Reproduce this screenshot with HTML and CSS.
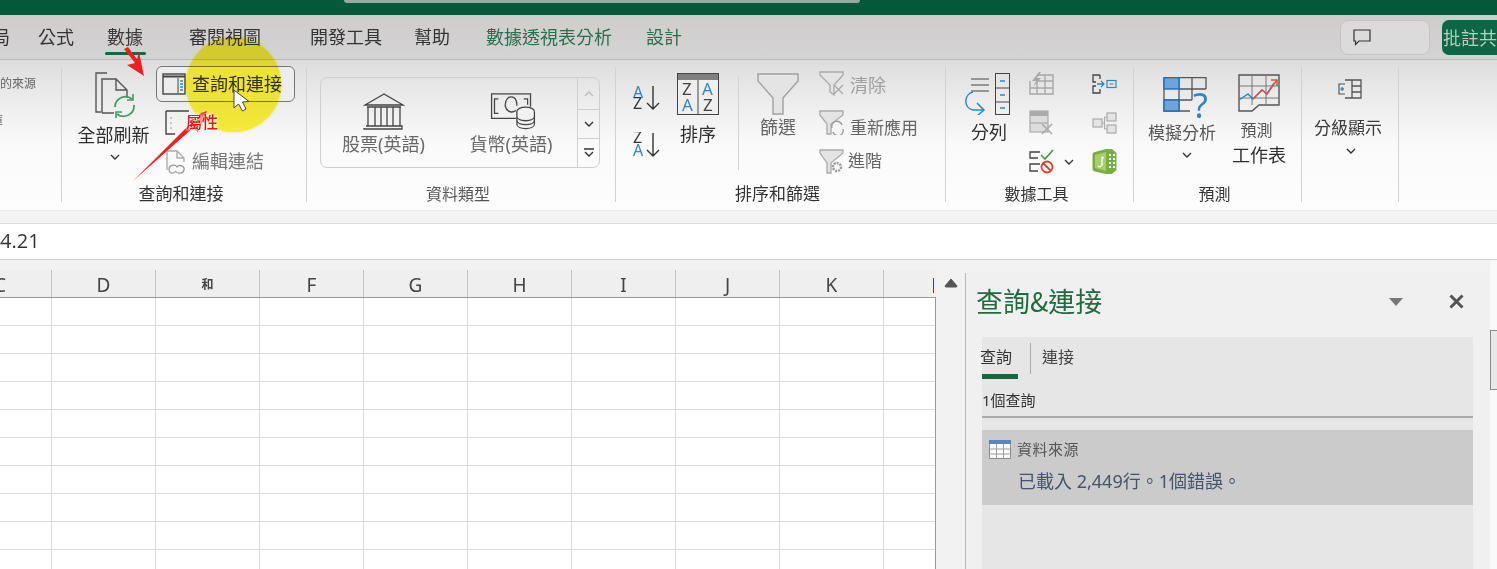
FILE: index.html
```html
<!DOCTYPE html>
<html lang="zh-Hant">
<head>
<meta charset="utf-8">
<title>Excel 查詢和連接</title>
<link rel="stylesheet" href="styles.css">
</head>
<body>
<div class="page">
  <header class="titlebar"><div class="searchbox"></div></header>

  <nav class="tabs">
    <span class="tab t0">局</span>
    <span class="tab t1">公式</span>
    <span class="tab t2 active">數據</span>
    <span class="tab t3">審閱視圖</span>
    <span class="tab t4">開發工具</span>
    <span class="tab t5">幫助</span>
    <span class="tab t6 ctx">數據透視表分析</span>
    <span class="tab t7 ctx">設計</span>
    <span class="tabs-right">
      <span class="comment-btn">
        <svg width="18" height="17" viewBox="0 0 18 17"><path d="M1 1H17V12H6L2.500 15.500V12H1Z" fill="none" stroke="#333" stroke-width="1.200"/></svg>
      </span>
      <span class="share-btn">批註共</span>
    </span>
  </nav>

  <section class="ribbon">
    <div class="group g1">
      <div class="body g1-body">
        <span class="tiny">的來源</span>
        <span class="tiny clipped">庫</span>
      </div>
    </div>

    <div class="group g2">
      <div class="body">
        <div class="bigcol refresh">
          <svg width="46" height="46" viewBox="0 0 46 46">
            <path d="M13 1H2V40H7" fill="none" stroke="#555" stroke-width="1.400"/>
            <path d="M8 41V7H22L33 18V26M8 41H20M22 7V18H33" fill="none" stroke="#555" stroke-width="1.400"/>
            <path d="M21 35A10.500 10.500 0 0 1 38 27M40 33A10.500 10.500 0 0 1 23 42" fill="none" stroke="#3f9a63" stroke-width="1.800"/>
            <path d="M39 22V28H33M22 46V40H28" fill="none" stroke="#3f9a63" stroke-width="1.600"/>
          </svg>
          <span class="biglabel">全部刷新</span>
          <svg class="chev" width="10" height="6" viewBox="0 0 10 6"><path d="M1 1L5 5L9 1" fill="none" stroke="#333" stroke-width="1.400"/></svg>
        </div>
        <div class="qcol">
          <div class="qbtn">
            <svg width="24" height="22" viewBox="0 0 24 22">
              <rect x="1" y="1" width="22" height="20" fill="none" stroke="#444" stroke-width="1.400"/>
              <path d="M1 3.500H23" stroke="#444" stroke-width="2"/>
              <path d="M16 5V20" stroke="#444" stroke-width="1"/>
              <path d="M18 8H21M18 11H21M18 14H21M18 17H21" stroke="#2f86c4" stroke-width="1.500"/>
            </svg>
            <span class="qtext">查詢和連接</span>
          </div>
          <div class="qrow">
            <svg width="26" height="26" viewBox="0 0 26 26">
              <path d="M1 1H24M1 1V24H10" fill="none" stroke="#444" stroke-width="1.400"/>
              <path d="M6 7V9M6 12V14M6 17V19" stroke="#999" stroke-width="1"/>
            </svg>
          </div>
          <div class="qrow edit">
            <svg width="22" height="25" viewBox="0 0 22 25">
              <path d="M2 20V1H12L19 8V12M12 1V8H19" fill="none" stroke="#aaa" stroke-width="1.300"/>
              <path d="M4 19C4 15 10 14 12 17C14 14 20 16 19 20C18 24 12 24 10 21" fill="none" stroke="#999" stroke-width="1.300"/>
              <path d="M4 19C4 24 9 24 11 21" fill="none" stroke="#aaa" stroke-width="1.300"/>
            </svg>
            <span class="muted">編輯連結</span>
          </div>
        </div>
      </div>
      <div class="grouplabel wide dark">查詢和連接</div>
    </div>

    <div class="group g3">
      <div class="body">
        <div class="gallery">
          <div class="gitem stock">
            <svg width="42" height="37" viewBox="0 0 42 37">
              <path d="M21 1L2 12H40Z" fill="none" stroke="#444" stroke-width="1.300"/>
              <path d="M4 14H38M5 33V14M12 33V14M18 33V14M24 33V14M30 33V14M37 33V14" fill="none" stroke="#444" stroke-width="1.300"/>
              <path d="M3 33H39V36H1V35" fill="none" stroke="#444" stroke-width="1.300"/>
            </svg>
            <span class="glabel">股票(英語)</span>
          </div>
          <div class="gitem money">
            <svg width="46" height="38" viewBox="0 0 46 38">
              <path d="M26 26H1V1H41V14" fill="none" stroke="#444" stroke-width="1.300"/>
              <path d="M8 6H4V21H8M34 6H38V12" fill="none" stroke="#444" stroke-width="1.300"/>
              <path d="M26 18C20 22 15 17 15 12C15 6 19 4 21 4C25 4 27 8 27 13" fill="none" stroke="#444" stroke-width="1.300"/>
              <ellipse cx="36" cy="19" rx="9" ry="4.500" fill="#f2f2f2" stroke="#444" stroke-width="1.300"/>
              <path d="M27 19V32C27 38 45 38 45 32V19M27 24C27 30 45 30 45 24M27 28C27 34 45 34 45 28" fill="#f2f2f2" stroke="#444" stroke-width="1.300"/>
            </svg>
            <span class="glabel">貨幣(英語)</span>
          </div>
          <div class="gscroll">
            <span class="gs gs1"><svg width="10" height="6" viewBox="0 0 10 6"><path d="M1 5L5 1L9 5" fill="none" stroke="#bbb" stroke-width="1.300"/></svg></span>
            <span class="gs gs2"><svg width="10" height="6" viewBox="0 0 10 6"><path d="M1 1L5 5L9 1" fill="none" stroke="#333" stroke-width="1.400"/></svg></span>
            <span class="gs gs3"><svg width="10" height="10" viewBox="0 0 10 10"><path d="M0 1H10" stroke="#333" stroke-width="1.300"/><path d="M1 4L5 8L9 4" fill="none" stroke="#333" stroke-width="1.400"/></svg></span>
          </div>
        </div>
      </div>
      <div class="grouplabel">資料類型</div>
    </div>

    <div class="group g4">
      <div class="body">
        <div class="azcol">
          <svg width="30" height="27" viewBox="0 0 30 27">
            <text x="1" y="13" class="az blue">A</text>
            <text x="1" y="24" class="az">Z</text>
            <path d="M21 1V24M15 18L21 24L27 18" fill="none" stroke="#333" stroke-width="1.400"/>
          </svg>
          <svg width="30" height="27" viewBox="0 0 30 27">
            <text x="1" y="11" class="az">Z</text>
            <text x="1" y="24" class="az blue">A</text>
            <path d="M21 1V24M15 18L21 24L27 18" fill="none" stroke="#333" stroke-width="1.400"/>
          </svg>
        </div>
        <div class="bigcol sort">
          <svg width="42" height="42" viewBox="0 0 42 42">
            <rect x="0.500" y="0.500" width="41" height="41" fill="#efefef" stroke="#444"/>
            <rect x="1" y="1" width="40" height="6" fill="#808080"/>
            <path d="M21 7V41" stroke="#444" stroke-width="1"/>
            <text x="5" y="22" class="az2">Z</text><text x="5" y="38" class="az2 blue">A</text>
            <text x="25" y="22" class="az2 blue">A</text><text x="26" y="38" class="az2">Z</text>
          </svg>
          <span class="biglabel">排序</span>
        </div>
        <div class="vsep"></div>
        <div class="bigcol filter">
          <svg width="42" height="42" viewBox="0 0 42 42">
            <path d="M1 1H41V8L26 25V41H16V25L1 8Z" fill="#e4e4e4" stroke="#a0a0a0" stroke-width="1.400"/>
          </svg>
          <span class="biglabel muted2">篩選</span>
        </div>
        <div class="fcol">
          <div class="frow">
            <svg width="26" height="25" viewBox="0 0 26 25">
              <path d="M1 1H24V4L15 14V24L11 21V14L1 4Z" fill="#e4e4e4" stroke="#aaa" stroke-width="1.300"/>
              <path d="M15 14L24 23M24 14L15 23" stroke="#aaa" stroke-width="1.400"/>
            </svg>
            <span class="ftext c1">清除</span>
          </div>
          <div class="frow">
            <svg width="26" height="25" viewBox="0 0 26 25">
              <path d="M1 1H24V5L12 14V24H8V14L1 5Z" fill="#e4e4e4" stroke="#aaa" stroke-width="1.300"/>
              <path d="M13 18A5 5 0 0 1 23 15M24 19A5 5 0 0 1 14 22" fill="none" stroke="#999" stroke-width="1.300"/>
            </svg>
            <span class="ftext c2">重新應用</span>
          </div>
          <div class="frow">
            <svg width="26" height="25" viewBox="0 0 26 25">
              <path d="M1 1H24V4L12 14V24H8V14L1 4Z" fill="#e4e4e4" stroke="#aaa" stroke-width="1.300"/>
              <circle cx="18" cy="18" r="4" fill="none" stroke="#999" stroke-width="2.400" stroke-dasharray="2 1"/>
            </svg>
            <span class="ftext c3">進階</span>
          </div>
        </div>
      </div>
      <div class="grouplabel wide dark">排序和篩選</div>
    </div>

    <div class="group g5">
      <div class="body">
        <div class="bigcol split">
          <svg width="46" height="42" viewBox="0 0 46 42">
            <path d="M7 6H25M7 12H25M7 18H25" stroke="#444" stroke-width="1.200"/>
            <rect x="31.500" y="0.500" width="14" height="41" fill="none" stroke="#444"/>
            <path d="M32 15H45M32 29H45" stroke="#444"/>
            <path d="M36 8H41M36 22H41M36 35H41" stroke="#2f86c4" stroke-width="1.400"/>
            <path d="M9 19C0 21 -1 35 9 37H20" fill="none" stroke="#2f86c4" stroke-width="1.500"/>
            <path d="M13 30L20 37L13 43" fill="none" stroke="#2f86c4" stroke-width="1.500"/>
          </svg>
          <span class="biglabel">分列</span>
        </div>
        <div class="tcol">
          <div class="trow">
            <svg width="25" height="23" viewBox="0 0 25 23">
              <path d="M8 3H24V22H1V9M1 16H24M8 9V22M16 3V22M8 9H24" fill="none" stroke="#a8a8a8" stroke-width="1.400"/>
              <path d="M10 0L3 9H7L4 15L12 6H8L12 0Z" fill="#a8a8a8"/>
            </svg>
          </div>
          <div class="trow">
            <svg width="25" height="25" viewBox="0 0 25 25">
              <rect x="1" y="1" width="18" height="21" fill="#dcdcdc" stroke="#aaa" stroke-width="1.200"/>
              <rect x="1" y="1" width="18" height="5" fill="#aaa"/>
              <path d="M1 13H19" stroke="#aaa" stroke-width="1.200"/>
              <path d="M13 14L23 24M23 14L13 24" stroke="#aaa" stroke-width="1.600"/>
            </svg>
          </div>
          <div class="trow">
            <svg width="25" height="25" viewBox="0 0 25 25">
              <path d="M11 3H1V9H9M11 15H1V22H9" fill="none" stroke="#444" stroke-width="1.300"/>
              <path d="M12 6L16 10L24 1" fill="none" stroke="#3f9a4b" stroke-width="1.700"/>
              <circle cx="18" cy="18" r="5.500" fill="none" stroke="#d8412f" stroke-width="1.800"/>
              <path d="M14 14L22 22" stroke="#d8412f" stroke-width="1.800"/>
            </svg>
            <svg class="tchev" width="10" height="6" viewBox="0 0 10 6"><path d="M1 1L5 5L9 1" fill="none" stroke="#333" stroke-width="1.400"/></svg>
          </div>
        </div>
        <div class="tcol narrow">
          <div class="trow">
            <svg width="25" height="20" viewBox="0 0 25 20">
              <path d="M8 1H1V8H4M4 12H1V19H8V15M8 5V1" fill="none" stroke="#444" stroke-width="1.300"/>
              <path d="M5 10H12M9 7L12 10L9 13" fill="none" stroke="#2f86c4" stroke-width="1.300"/>
              <rect x="15" y="6.500" width="9" height="7" fill="none" stroke="#2f86c4" stroke-width="1.200"/>
              <path d="M17.500 10H21.500" stroke="#2f86c4"/>
            </svg>
          </div>
          <div class="trow">
            <svg width="25" height="22" viewBox="0 0 25 22">
              <rect x="1" y="7" width="9" height="8" fill="#e4e4e4" stroke="#aaa" stroke-width="1.200"/>
              <rect x="15" y="1" width="9" height="8" fill="#e4e4e4" stroke="#aaa" stroke-width="1.200"/>
              <rect x="15" y="13" width="9" height="8" fill="#e4e4e4" stroke="#aaa" stroke-width="1.200"/>
              <path d="M10 11H12.500M12.500 5V17M12.500 5H15M12.500 17H15" fill="none" stroke="#aaa" stroke-width="1.200"/>
            </svg>
          </div>
          <div class="trow">
            <svg width="25" height="25" viewBox="0 0 25 25">
              <path d="M0.500 5Q0.500 3.500 3 3L14 0H20L24.500 4V21L20 25H14L3 22.500Q0.500 22 0.500 20Z" fill="#7aae45"/>
              <path d="M3 6L14 3V22L3 19Z" fill="#a6cf6a"/>
              <path d="M10 8V16L8 18L6 17M10 8L12 9" fill="none" stroke="#fff" stroke-width="1.200"/>
              <path d="M17 6H19M21 6H23M17 10H19M21 10H23M17 14H19M21 14H23M17 18H19M21 18H23" stroke="#fff" stroke-width="2"/>
            </svg>
          </div>
        </div>
      </div>
      <div class="grouplabel dark">數據工具</div>
    </div>

    <div class="group g6">
      <div class="body">
        <div class="bigcol whatif">
          <svg width="48" height="42" viewBox="0 0 48 42">
            <path d="M1 0.700H43V12M29 12H43M16 12H29M1 23H29M1 0.700V34H27M16 0.700V34M29 0.700V23" fill="none" stroke="#555" stroke-width="1.300"/>
            <rect x="1" y="0.700" width="15" height="11.300" fill="#6ba5dc" stroke="#1f6fb5" stroke-width="1.400"/>
            <rect x="1" y="23" width="15" height="11" fill="#6ba5dc" stroke="#1f6fb5" stroke-width="1.400"/>
            <text x="30" y="41" class="qmark">?</text>
          </svg>
          <span class="label17">模擬分析</span>
          <svg class="chev" width="10" height="6" viewBox="0 0 10 6"><path d="M1 1L5 5L9 1" fill="none" stroke="#333" stroke-width="1.400"/></svg>
        </div>
        <div class="bigcol fsheet">
          <svg width="42" height="38" viewBox="0 0 42 38">
            <path d="M14 37H1V1H41V31H21Z" fill="none" stroke="#555" stroke-width="1.400"/>
            <path d="M1 12H41M1 24H41M14 1V31M28 1V31" fill="none" stroke="#777" stroke-width="1"/>
            <path d="M1 26L10 20L15 25L24 16L29 20L36 9" fill="none" stroke="#2f86c4" stroke-width="1.400"/>
            <path d="M15 25L24 16L29 20L39 6M33 6H39V12" fill="none" stroke="#d9533c" stroke-width="1.500"/>
          </svg>
          <span class="small16">預測</span>
          <span class="biglabel sheetname">工作表</span>
        </div>
      </div>
      <div class="grouplabel dark">預測</div>
    </div>

    <div class="group g7">
      <div class="body">
        <div class="bigcol outline">
          <svg width="25" height="20" viewBox="0 0 25 20">
            <path d="M7 5H1V15H7" fill="none" stroke="#555" stroke-width="1.200"/>
            <path d="M2.500 10H6M4.200 8V12" stroke="#2f86c4" stroke-width="1.400"/>
            <path d="M7 1H23V19H7M14 1V19M14 7H23M14 13H23" fill="none" stroke="#555" stroke-width="1.300"/>
          </svg>
          <span class="label17">分級顯示</span>
          <svg class="chev" width="10" height="6" viewBox="0 0 10 6"><path d="M1 1L5 5L9 1" fill="none" stroke="#333" stroke-width="1.400"/></svg>
        </div>
      </div>
    </div>
  </section>

  <div class="gap"></div>
  <div class="formula">4.21</div>

  <main class="sheet">
    <div class="cells">
      <div class="colheads">
        <span class="ch first">C</span>
        <span class="ch">D</span>
        <span class="ch cjk">和</span>
        <span class="ch">F</span>
        <span class="ch">G</span>
        <span class="ch">H</span>
        <span class="ch">I</span>
        <span class="ch">J</span>
        <span class="ch">K</span>
        <span class="ch last"><i class="cursorbar"></i></span>
      </div>
      <div class="gridbody"></div>
    </div>
    <div class="vscroll">
      <svg width="14" height="10" viewBox="0 0 14 10"><path d="M7 1L13 8Q13 9 12 9H2Q1 9 1 8Z" fill="#555" stroke="#555"/></svg>
    </div>
    <aside class="panel">
      <div class="panel-head">
        <h1 class="panel-title">查詢&amp;連接</h1>
        <svg class="pdrop" width="14" height="8" viewBox="0 0 14 8"><path d="M0 0H14L7 8Z" fill="#777"/></svg>
        <svg class="pclose" width="15" height="15" viewBox="0 0 15 15"><path d="M1.500 1.500L13.500 13.500M13.500 1.500L1.500 13.500" stroke="#555" stroke-width="3"/></svg>
      </div>
      <div class="pbox">
        <div class="ptabs">
          <span class="ptab on">查詢</span>
          <span class="ptab off">連接</span>
        </div>
        <div class="punder"></div>
        <div class="pcount">1個查詢</div>
        <div class="qitem">
          <div class="qname">
            <svg width="22" height="19" viewBox="0 0 22 19">
              <rect x="0.500" y="0.500" width="21" height="18" fill="#fff" stroke="#8a8a8a"/>
              <rect x="0" y="0" width="22" height="4" fill="#5b84b8"/>
              <path d="M0 9H22M0 14H22M7.500 4V19M14.500 4V19" stroke="#9a9a9a"/>
            </svg>
            <span>資料來源</span>
          </div>
          <div class="qdesc">已載入 2,449行。1個錯誤。</div>
        </div>
      </div>
    </aside>
    <div class="edgebar"><div class="thumb"></div></div>
  </main>

  <div class="spot"></div>
  <svg class="marks" width="1497" height="569" viewBox="0 0 1497 569">
    <path d="M124 49L128 47L137 59L139 52L144 76L127 65L135 63Z" fill="#ee2020"/>
    <path d="M133 181L186 128L193 120L201 113L207 111L198 132L193 128Z" fill="#ee2020"/>
    <path d="M234 90V108L238.500 104L242.500 111L246 109L242.500 102L249 101.500Z" fill="#fff" stroke="#444" stroke-width="1"/>
  </svg>
  <span class="attr">屬性</span>
</div>
</body>
</html>
```
FILE: styles.css
```css
* { box-sizing: border-box; }
html, body { margin: 0; padding: 0; }
body {
  font-family: "Noto Sans", "Noto Sans CJK TC", sans-serif;
  color: #333;
  background: #f4f4f4;
}
.page { position: relative; width: 1497px; height: 569px; overflow: hidden; }
svg { display: block; flex: none; }

.titlebar { height: 15px; background: #05583a; padding-left: 344px; }
.searchbox { width: 516px; height: 3px; background: #9aa8a2; border-radius: 0 0 5px 5px; }

.tabs {
  height: 45px;
  display: flex;
  align-items: flex-start;
  background: linear-gradient(#cfcdcc, #d4d4d4);
  border-bottom: 1px solid #b9b9b9;
  font-family: "Noto Sans CJK TC", sans-serif;
  font-size: 18px;
  line-height: 24px;
  color: #333;
}
.tab { flex: none; margin-top: 9px; }
.t0 { margin-left: -8px; }
.t1 { margin-left: 28px; }
.t2 { margin-left: 33px; position: relative; color: #3c3c3c; }
.active::after {
  content: ""; position: absolute; left: -2px; right: -3px; top: 28px; height: 3px; background: #1a6642; border-radius: 2px;
}
.t3 { margin-left: 46px; }
.t4 { margin-left: 49px; }
.t5 { margin-left: 32px; }
.t6 { margin-left: 36px; }
.t7 { margin-left: 34px; }
.ctx { color: #2c6e4b; }
.tabs-right { margin-left: auto; display: flex; margin-top: 5px; }
.comment-btn {
  width: 90px; height: 35px; border: 1px solid #c4c4c4; border-radius: 8px; background: #dbdbdb;
  display: flex; align-items: center; padding-left: 12px;
}
.share-btn {
  width: 55px; height: 35px; margin-left: 12px; background: #0d6645; border-radius: 7px 0 0 7px;
  color: #b5cfc0; font-size: 18px; line-height: 35px; white-space: nowrap; overflow: hidden; padding-left: 1px;
}

.ribbon {
  height: 150px;
  display: flex;
  padding-top: 7px;
  background: linear-gradient(#dddddd 0, #ececec 40px, #fafafa 85px, #fdfdfd 150px);
  font-family: "Noto Sans CJK TC", sans-serif;
}
.group {
  flex: none; height: 135px; border-right: 1px solid #d2d2d2;
  display: flex; flex-direction: column; position: relative;
}
.g1 { width: 62px; } .g2 { width: 245px; } .g3 { width: 309px; }
.g4 { width: 330px; } .g5 { width: 188px; } .g6 { width: 168px; } .g7 { width: 97px; }
.body { height: 116px; display: flex; align-items: flex-start; }
.g1-body { flex-direction: column; align-items: flex-start; overflow: hidden; }
.tiny { font-size: 12px; line-height: 16px; color: #666; margin-top: 8px; }
.clipped { margin-left: -9px; margin-top: 21px; }
.grouplabel { height: 19px; padding-right: 6px; font-size: 16px; line-height: 20px; color: #555; text-align: center; }
.grouplabel.wide { font-size: 17px; }
.grouplabel.dark { color: #333; }

.bigcol { flex: none; display: flex; flex-direction: column; align-items: center; padding-top: 6px; }
.biglabel { font-size: 18px; line-height: 24px; color: #2f2f2f; white-space: nowrap; }
.muted { color: #777; font-size: 18px; line-height: 24px; }
.muted2 { color: #666; }
.label17 { font-size: 17px; line-height: 24px; color: #4a4a4a; white-space: nowrap; }
.small16 { font-size: 16px; line-height: 22px; color: #555; }
.chev { margin-top: 8px; }

.refresh { width: 76px; margin-left: 15px; padding-top: 5px; }
.refresh svg:first-child { margin-left: 3px; }
.refresh .biglabel { margin: 4px 3px 0 0; }
.qcol { margin-left: 3px; display: flex; flex-direction: column; }
.qbtn {
  width: 139px; height: 36px; margin-top: -1px; border: 1px solid #777; border-radius: 6px;
  display: flex; align-items: center; padding-left: 5px; background: #ededed;
}
.qtext { margin: 0 0 3px 6px; font-size: 18px; line-height: 24px; color: #333; }
.qrow { height: 33px; display: flex; align-items: center; padding-left: 9px; margin-top: 4px; }
.qrow.edit { height: 30px; margin-top: 8px; padding-left: 9px; }
.qrow.edit span { margin: 0 0 4px 5px; }

.gallery {
  width: 280px; height: 91px; margin: 10px 0 0 13px; border: 1px solid #cfcfcf; border-radius: 7px;
  display: flex; overflow: hidden;
}
.gitem { flex: none; display: flex; flex-direction: column; align-items: center; padding-top: 15px; }
.stock { width: 125px; }
.money { width: 130px; }
.money svg { margin-left: 4px; }
.gitem svg { height: 37px; }
.glabel { margin-top: 2px; font-size: 18px; line-height: 24px; color: #686868; white-space: nowrap; font-family: "Noto Sans", "Noto Sans CJK TC", sans-serif; }
.gscroll { width: 23px; margin-left: 1px; border-left: 1px solid #cfcfcf; display: flex; flex-direction: column; }
.gs { flex: none; display: flex; align-items: center; justify-content: center; border-bottom: 1px solid #cfcfcf; }
.gs1 { height: 32px; } .gs2 { height: 29px; } .gs3 { flex: 1; border-bottom: 0; }

.azcol { margin: 18px 0 0 16px; width: 30px; display: flex; flex-direction: column; gap: 20px; }
.az { font: 16px "Noto Sans", sans-serif; fill: #333; }
.az2 { font: 17px "Noto Sans", sans-serif; fill: #444; }
.blue { fill: #2f86c4; }
.qmark { font: 34px "Noto Sans", sans-serif; fill: #2f86c4; }
.sort { width: 42px; margin-left: 15px; }
.sort .biglabel { margin-top: 6px; }
.vsep { width: 1px; height: 94px; margin: 9px 0 0 19px; background: #d2d2d2; }
.filter { width: 42px; margin-left: 18px; }
.filter .biglabel { margin-top: -1px; }
.fcol { margin: -3px 0 0 20px; display: flex; flex-direction: column; }
.frow { height: 39px; display: flex; align-items: center; }
.ftext { white-space: nowrap; }
.c1 { font-size: 18px; line-height: 24px; color: #a0a0a0; margin: 0 0 0 5px; }
.c2 { font-size: 17px; line-height: 24px; color: #666; margin: 8px 0 0 5px; }
.c3 { font-size: 17px; line-height: 24px; color: #666; margin: 0 0 4px 3px; }

.split { width: 46px; margin-left: 18px; }
.split .biglabel { margin: 4px 0 0 4px; }
.tcol { margin: -3px 0 0 19px; width: 46px; display: flex; flex-direction: column; }
.tcol.narrow { margin-left: 17px; width: 25px; }
.trow { height: 39px; display: flex; align-items: center; }
.tchev { margin-left: 10px; }

.whatif { width: 72px; margin-left: 12px; padding-top: 10px; }
.whatif svg:first-child { margin-left: 9px; }
.whatif .label17 { margin-top: 1px; color: #555; }
.whatif .chev { margin: 8px 0 0 10px; }
.fsheet { width: 60px; margin-left: 11px; padding-top: 7px; }
.fsheet .small16 { margin: 6px 5px 0 0; }
.sheetname { margin-top: 2px; }
.outline { width: 70px; margin-left: 11px; padding-top: 12px; }
.outline svg:first-child { margin-left: 4px; }
.outline .label17 { margin-top: 16px; color: #3a3a3a; }
.outline .chev { margin: 9px 0 0 6px; }

.gap { height: 13px; background: #f3f3f3; border-top: 1px solid #ececec; }
.formula {
  height: 37px; background: #fff; border-top: 1px solid #dcdcdc; border-bottom: 1px solid #d0d0d0;
  font-family: "Open Sans", sans-serif; font-size: 20px; line-height: 34px; color: #333; padding-left: 0;
}

.sheet { height: 309px; display: flex; background: #f2f2f2; }
.cells { width: 936px; flex: none; padding-top: 10px; }
.colheads { height: 28px; display: flex; background: #efefef; border-bottom: 1px solid #9a9a9a; overflow: hidden; }
.ch {
  flex: none; width: 104px; height: 27px; border-right: 1px solid #c4c4c4; text-align: center;
  font-size: 19px; line-height: 31px; color: #444; font-family: "Noto Sans", sans-serif;
}
.ch.first { width: 52px; text-align: left; text-indent: -6px; }
.ch.cjk { font-family: "Noto Sans CJK TC", sans-serif; font-size: 12px; font-weight: 700; line-height: 28px; }
.ch.last { width: 51px; border-right: 0; position: relative; }
.cursorbar { position: absolute; left: 49px; top: 8px; width: 1px; height: 15px; background: #6b3a20; }
.gridbody {
  height: 271px;
  border-right: 1px solid #9a9a9a;
  background-color: #fff;
  background-image: linear-gradient(to right, transparent 103px, #dcdcdc 103px), linear-gradient(transparent 27px, #dcdcdc 27px);
  background-size: 104px 100%, 100% 28px;
  background-position: -52px 0, 0 0;
}
.vscroll { width: 29px; flex: none; padding: 18px 0 0 8px; background: #f2f2f2; }

.panel {
  width: 525px; flex: none; margin-top: 13px; border-left: 1px solid #b8b8b8; background: #f0f0f0;
  display: flex; flex-direction: column; font-family: "Noto Sans CJK TC", sans-serif;
}
.panel-head { height: 64px; display: flex; align-items: flex-start; padding: 10px 0 0 10px; flex: none; }
.panel-title { margin: 0; font-weight: 400; font-size: 27px; line-height: 36px; color: #226b40; width: 413px; font-family: "Noto Sans CJK TC", sans-serif; }
.pdrop { margin-top: 15px; }
.pclose { margin: 11px 0 0 46px; }
.pbox { margin-left: 16px; width: 491px; flex: 1; background: #e6e6e6; }
.ptabs { height: 37px; display: flex; padding-top: 6px; font-size: 16px; line-height: 26px; }
.ptab { color: #333; }
.ptab.on { margin-left: -2px; padding-right: 18px; }
.ptab.off { border-left: 1px solid #a8a8a8; padding-left: 11px; color: #444; }
.punder { width: 36px; height: 5px; background: #1a6642; }
.pcount { height: 39px; border-bottom: 2px solid #aaa; font-size: 15px; line-height: 42px; color: #333; font-family: "Noto Sans", "Noto Sans CJK TC", sans-serif; }
.qitem { margin-top: 12px; height: 75px; background: #cbcbcb; padding: 10px 0 0 7px; }
.qname { display: flex; align-items: center; font-size: 15px; line-height: 19px; color: #555; }
.qname span { margin: -3px 0 0 6px; letter-spacing: 0.500px; }
.qdesc { margin: 10px 0 0 29px; font-size: 18px; line-height: 24px; color: #44546a; font-family: "Noto Sans", "Noto Sans CJK TC", sans-serif; }
.edgebar { flex: 1; background: #f9f9f9; padding-top: 70px; }
.thumb { width: 8px; height: 60px; border: 1px solid #8a8a8a; border-right: 0; background: #e8e8e8; }

.spot {
  position: absolute; left: 186px; top: 37px; width: 95px; height: 95px; border-radius: 50%;
  background: #fff43a; mix-blend-mode: multiply; box-shadow: 0 0 3px #fff43a;
}
.marks { position: absolute; left: 0; top: 0; pointer-events: none; }
.attr {
  position: absolute; left: 186px; top: 110px; font: 500 16px/22px "Noto Sans CJK TC", sans-serif; color: #e81212;
  text-shadow: 0 0 2px #fff, 0 0 3px #fff, 0 0 4px #fff;
}
```
